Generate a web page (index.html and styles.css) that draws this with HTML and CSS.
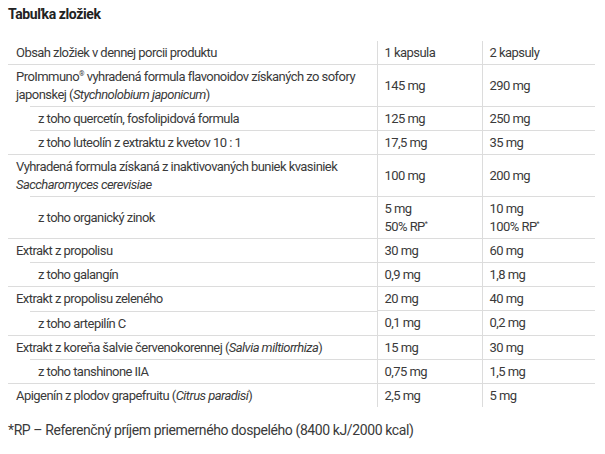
FILE: index.html
```html
<!DOCTYPE html>
<html lang="sk">
<head>
<meta charset="utf-8">
<title>Tabuľka zložiek</title>
<link rel="stylesheet" href="styles.css">
</head>
<body>
<h2 class="title">Tabuľka zložiek</h2>
<table class="ing">
  <colgroup><col class="c1"><col class="c2"><col class="c3"></colgroup>
  <tbody>
    <tr class="head">
      <td>Obsah zložiek v dennej porcii produktu</td>
      <td>1 kapsula</td>
      <td>2 kapsuly</td>
    </tr>
    <tr>
      <td>ProImmuno<span class="reg">®</span> vyhradená formula flavonoidov získaných zo sofory japonskej (<i>Stychnolobium japonicum</i>)</td>
      <td>145 mg</td>
      <td>290 mg</td>
    </tr>
    <tr class="sub">
      <td>z toho quercetín, fosfolipidová formula</td>
      <td>125 mg</td>
      <td>250 mg</td>
    </tr>
    <tr class="sub">
      <td>z toho luteolín z extraktu z kvetov 10 : 1</td>
      <td>17,5 mg</td>
      <td>35 mg</td>
    </tr>
    <tr>
      <td>Vyhradená formula získaná z inaktivovaných buniek kvasiniek <i>Saccharomyces cerevisiae</i></td>
      <td>100 mg</td>
      <td>200 mg</td>
    </tr>
    <tr class="sub">
      <td>z toho organický zinok</td>
      <td>5 mg<br>50% RP<span class="reg">*</span></td>
      <td>10 mg<br>100% RP<span class="reg">*</span></td>
    </tr>
    <tr>
      <td>Extrakt z propolisu</td>
      <td>30 mg</td>
      <td>60 mg</td>
    </tr>
    <tr class="sub">
      <td>z toho galangín</td>
      <td>0,9 mg</td>
      <td>1,8 mg</td>
    </tr>
    <tr>
      <td>Extrakt z propolisu zeleného</td>
      <td>20 mg</td>
      <td>40 mg</td>
    </tr>
    <tr class="sub">
      <td>z toho artepilín C</td>
      <td>0,1 mg</td>
      <td>0,2 mg</td>
    </tr>
    <tr>
      <td>Extrakt z koreňa šalvie červenokorennej (<i>Salvia miltiorrhiza</i>)</td>
      <td>15 mg</td>
      <td>30 mg</td>
    </tr>
    <tr class="sub">
      <td>z toho tanshinone IIA</td>
      <td>0,75 mg</td>
      <td>1,5 mg</td>
    </tr>
    <tr>
      <td>Apigenín z plodov grapefruitu (<i>Citrus paradisi</i>)</td>
      <td>2,5 mg</td>
      <td>5 mg</td>
    </tr>
  </tbody>
</table>
<p class="note">*RP – Referenčný príjem priemerného dospelého (8400 kJ/2000 kcal)</p>
</body>
</html>
```

FILE: styles.css
```css
html, body {
  margin: 0;
  padding: 0;
  background: #fff;
}
body {
  padding: 6px 8px 8px 8px;
  font-family: Roboto, "Liberation Sans", sans-serif;
  color: #3a3a3a;
}
.title {
  margin: 0 0 19px 0;
  font-size: 14px;
  line-height: 16px;
  font-weight: 700;
  letter-spacing: -0.4px;
  color: #222;
}
.ing {
  width: 587px;
  border-collapse: collapse;
  table-layout: fixed;
  font-size: 13px;
  line-height: 18px;
  letter-spacing: -0.55px;
}
.c1 { width: 369px; }
.c2 { width: 105px; }
.c3 { width: 113px; }
.ing td {
  padding: 3px 7px 2px 7px;
  vertical-align: middle;
  border-top: 1px solid #dcdcdc;
}
.ing td + td {
  border-left: 1px solid #dcdcdc;
}
.ing td:first-child {
  padding-left: 8px;
}
.ing .head td {
  border-top: none;
}
.ing .sub td:first-child {
  border-top: none;
  padding-top: 4px;
  padding-left: 30px;
  background: linear-gradient(#dcdcdc, #dcdcdc) no-repeat 22px 0 / calc(100% - 22px) 1px;
}
.ing .reg {
  font-size: 7px;
  line-height: 0;
  vertical-align: 5px;
}
.note {
  margin: 14px 0 0 0;
  font-size: 14px;
  line-height: 18px;
  letter-spacing: -0.4px;
}
```
